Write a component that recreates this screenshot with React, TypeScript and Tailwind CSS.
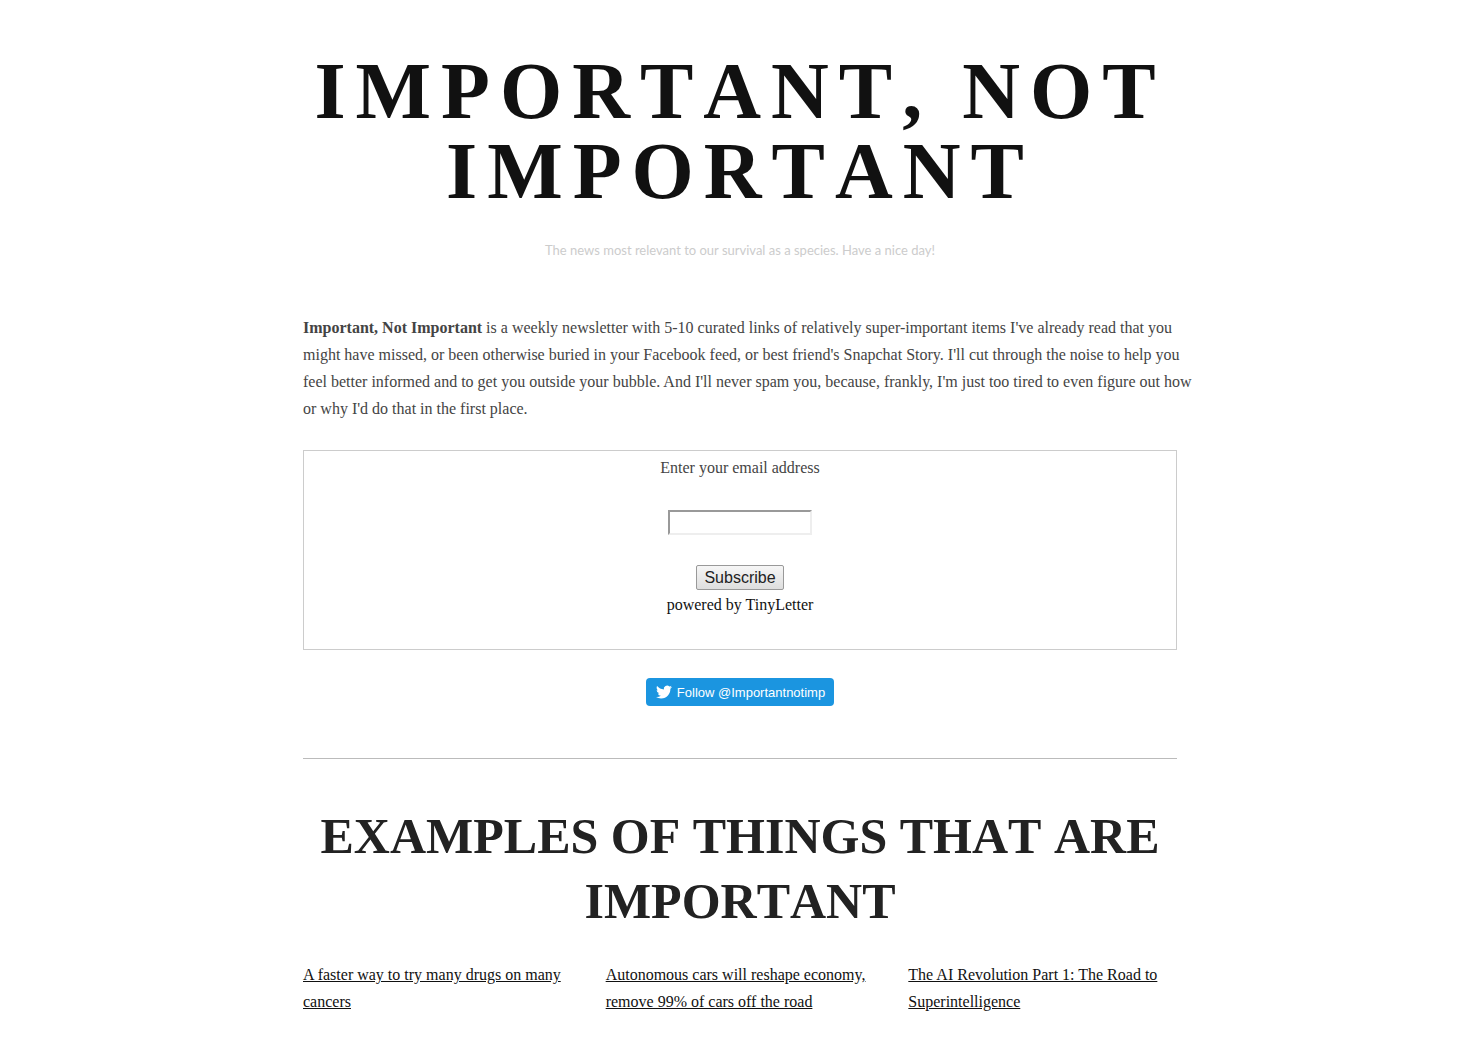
const links = [
  "A faster way to try many drugs on many cancers",
  "Autonomous cars will reshape economy, remove 99% of cars off the road",
  "The AI Revolution Part 1: The Road to Superintelligence",
];

export default function App() {
  return (
    <div className="min-h-screen bg-white px-6 pb-6 font-['Liberation_Serif',serif] text-[16px] leading-[27px] text-[#444]">
      <div className="mx-auto max-w-[874px]">
        <header className="pt-[51px] text-center">
          <h1 className="text-[80px] leading-[80px] font-bold tracking-[10px] text-[#111] uppercase [font-kerning:none]">
            Important, Not Important
          </h1>
          <p className="mt-[26px] font-['Lato',sans-serif] text-[13px] text-[#ccc]">
            The news most relevant to our survival as a species. Have a nice day!
          </p>
        </header>
        <main>
          <p className="mt-[50px] lg:whitespace-nowrap">
            <strong>Important, Not Important</strong> is a weekly newsletter with 5-10 curated links of relatively
            super-important items I've already read that you <br className="hidden lg:inline" />
            might have missed, or been otherwise buried in your Facebook feed, or best friend's Snapchat Story. I'll cut
            through the noise to help you <br className="hidden lg:inline" />
            feel better informed and to get you outside your bubble. And I'll never spam you, because, frankly, I'm just
            too tired to even figure out how <br className="hidden lg:inline" />
            or why I'd do that in the first place.
          </p>
          <form
            className="mt-7 flex flex-col items-center border border-[#ccc] pt-[3px] pb-[31px]"
            onSubmit={(e) => e.preventDefault()}
          >
            <label htmlFor="email">Enter your email address</label>
            <input
              id="email"
              type="text"
              className="mt-[29px] h-[25px] w-36 border-2 border-t-[#999] border-r-[#eee] border-b-[#eee] border-l-[#999] px-1"
            />
            <button
              type="submit"
              className="mt-[30px] h-[25px] w-[88px] rounded-[2px] border border-[#999] bg-linear-to-b from-[#f6f6f6] to-[#dedede] font-['Liberation_Sans',sans-serif] leading-[23px] text-[#222]"
            >
              Subscribe
            </button>
            <a href="#tinyletter" className="mt-px text-[#111]">
              powered by TinyLetter
            </a>
          </form>
          <div className="mt-7 flex justify-center">
            <a
              href="#twitter"
              className="flex h-7 items-center gap-[5px] rounded-[4px] bg-[#1b95e0] pr-[9px] pl-[10px] font-['Liberation_Sans',sans-serif] text-[13px] text-white"
            >
              <svg viewBox="0 0 24 24" className="size-4 fill-white" aria-hidden="true">
                <path d="M23.95 4.57a10 10 0 0 1-2.82.77 4.96 4.96 0 0 0 2.16-2.72c-.95.55-2 .96-3.13 1.18a4.92 4.92 0 0 0-8.38 4.48C7.69 8.1 4.07 6.13 1.64 3.16a4.82 4.82 0 0 0-.67 2.48c0 1.71.87 3.21 2.19 4.1a4.9 4.9 0 0 1-2.23-.62v.06a4.92 4.92 0 0 0 3.95 4.83 5 5 0 0 1-2.21.08 4.94 4.94 0 0 0 4.6 3.42A9.87 9.87 0 0 1 0 19.54a14 14 0 0 0 7.55 2.21c9.05 0 14-7.5 14-13.98 0-.21 0-.42-.02-.63a9.94 9.94 0 0 0 2.46-2.55z" />
              </svg>
              Follow @Importantnotimp
            </a>
          </div>
          <hr className="mt-[52px] border-[#bbb]" />
          <h2 className="mt-[45px] text-center text-[50px] leading-[65px] font-bold text-[#222] uppercase [font-kerning:none]">
            Examples of things that are important
          </h2>
          <div className="mt-[27px] grid grid-cols-3 gap-[34px]">
            {links.map((text) => (
              <a key={text} href="#article" className="text-[#111] underline">
                {text}
              </a>
            ))}
          </div>
        </main>
      </div>
    </div>
  );
}
